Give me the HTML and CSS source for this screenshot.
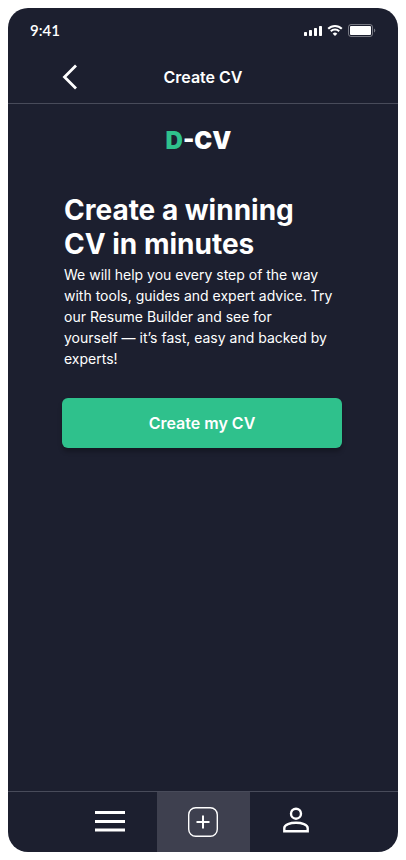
FILE: index.html
```html
<!DOCTYPE html>
<html lang="en">
<head>
<meta charset="utf-8">
<meta name="viewport" content="width=device-width, initial-scale=1">
<title>Create CV</title>
<link rel="stylesheet" href="styles.css">
</head>
<body>
<div class="screen">
  <div class="status">
    <span class="time">9:41</span>
    <div class="indicators">
      <svg width="18" height="12" viewBox="0 0 18 12" fill="#fff" aria-hidden="true">
        <rect x="0" y="8" width="3" height="4" rx=".7"/><rect x="5" y="6" width="3" height="6" rx=".7"/><rect x="10" y="4" width="3" height="8" rx=".7"/><rect x="15" y="2" width="3" height="10" rx=".7"/>
      </svg>
      <svg width="16" height="12" viewBox="0 0 15 12" fill="none" stroke="#fff" stroke-width="2" aria-hidden="true">
        <path d="M.7 4.7a9.6 9.6 0 0 1 13.6 0"/><path d="M3.3 7.3a6 6 0 0 1 8.4 0"/><path d="M7.500 12 5.200 9.700a3.300 3.300 0 0 1 4.600 0Z" fill="#fff" stroke="none"/>
      </svg>
      <svg width="28" height="13" viewBox="0 0 28 13" aria-hidden="true">
        <rect x=".5" y=".5" width="24" height="12" rx="2.500" fill="none" stroke="#fff" stroke-opacity=".4"/>
        <rect x="2" y="2" width="21" height="9" rx="1" fill="#fff"/>
        <path d="M26 4.500v4a2.200 2.200 0 0 0 0-4Z" fill="#fff" fill-opacity=".4"/>
      </svg>
    </div>
  </div>
  <header class="header">
    <button class="back" type="button" aria-label="Back">
      <svg width="16" height="26" viewBox="0 0 16 26" fill="none" stroke="#fff" stroke-width="2.800" aria-hidden="true"><path d="M14 1.500 2.500 13 14 24.500"/></svg>
    </button>
    <h1 class="title">Create CV</h1>
  </header>
  <main class="content">
    <div class="logo"><span class="accent">D</span>-CV</div>
    <h2 class="headline">Create a winning<br>CV in minutes</h2>
    <p class="intro">We will help you every step of the way<br>with tools, guides and expert advice. Try<br>our Resume Builder and see for<br>yourself — it’s fast, easy and backed by<br>experts!</p>
    <button class="cta" type="button">Create my CV</button>
  </main>
  <nav class="tabs">
    <a class="tab" href="#menu" aria-label="Menu">
      <svg width="30" height="30" viewBox="0 0 30 30" fill="#fff" aria-hidden="true"><path d="M0 4h30v3H0zM0 13h30v3H0zM0 21.500h30v3H0z"/></svg>
    </a>
    <a class="tab active" href="#create" aria-label="Create">
      <svg width="30" height="30" viewBox="0 0 30 30" fill="none" stroke="#fff" aria-hidden="true"><rect x=".7" y=".7" width="28.600" height="28.600" rx="7" stroke-width="1.400"/><path d="M15 8.500v13M8.500 15h13" stroke-width="2"/></svg>
    </a>
    <a class="tab" href="#profile" aria-label="Profile">
      <svg width="30" height="30" viewBox="0 0 30 30" fill="none" stroke="#fff" stroke-width="2.400" aria-hidden="true"><circle cx="15" cy="6.700" r="5"/><path d="M3.300 24.300v-3.200c0-3.500 6-5.400 11.700-5.400s11.700 1.900 11.700 5.400v3.200Z"/></svg>
    </a>
  </nav>
</div>
</body>
</html>
```
FILE: styles.css
```css
* {
  box-sizing: border-box;
}

body {
  margin: 0;
  padding: 8px;
  background: #fff;
  color: #fff;
  font-family: Inter, sans-serif;
}

.screen {
  display: flex;
  flex-direction: column;
  min-height: calc(100vh - 16px);
  border-radius: 20px;
  background: #1c1f2f;
  overflow: hidden;
}

.status {
  display: flex;
  align-items: center;
  justify-content: space-between;
  height: 44px;
  padding: 0 22px;
}

.time {
  font: 600 15px/20px Lato, sans-serif;
}

.indicators {
  display: flex;
  align-items: center;
  gap: 5px;
}

.header {
  display: grid;
  grid-template-columns: 40px 1fr 40px;
  align-items: center;
  height: 52px;
  padding: 0 52px 2px;
  border-bottom: 1px solid #484b5a;
}

.back {
  display: flex;
  padding: 0 2px;
  border: 0;
  background: none;
}

.title {
  margin: 0;
  font-size: 16px;
  line-height: 20px;
  font-weight: 600;
  text-align: center;
}

.content {
  flex: 1;
  display: flex;
  flex-direction: column;
  padding: 21px 56px;
}

.logo {
  padding-right: 9px;
  font-size: 24px;
  line-height: 32px;
  font-weight: 900;
  text-align: center;
}

.accent {
  color: #2fc18c;
}

.headline {
  margin: 36px 0 0;
  font-size: 28px;
  line-height: 34px;
  font-weight: 700;
}

.intro {
  margin: 3px 0 0;
  font-size: 14px;
  line-height: 21px;
  white-space: nowrap;
}

.cta {
  height: 50px;
  margin: 29px 0 0 -2px;
  border: 0;
  border-radius: 6px;
  background: #2fc18c;
  box-shadow: 0 4px 4px rgba(0, 0, 0, .25);
  color: #fff;
  font: 600 16px/20px Inter, sans-serif;
}

.tabs {
  display: flex;
  justify-content: center;
  height: 61px;
  border-top: 1px solid #484b5a;
}

.tab {
  display: flex;
  align-items: center;
  justify-content: center;
  width: 93px;
}

.tab.active {
  background: #3e404f;
}
```
